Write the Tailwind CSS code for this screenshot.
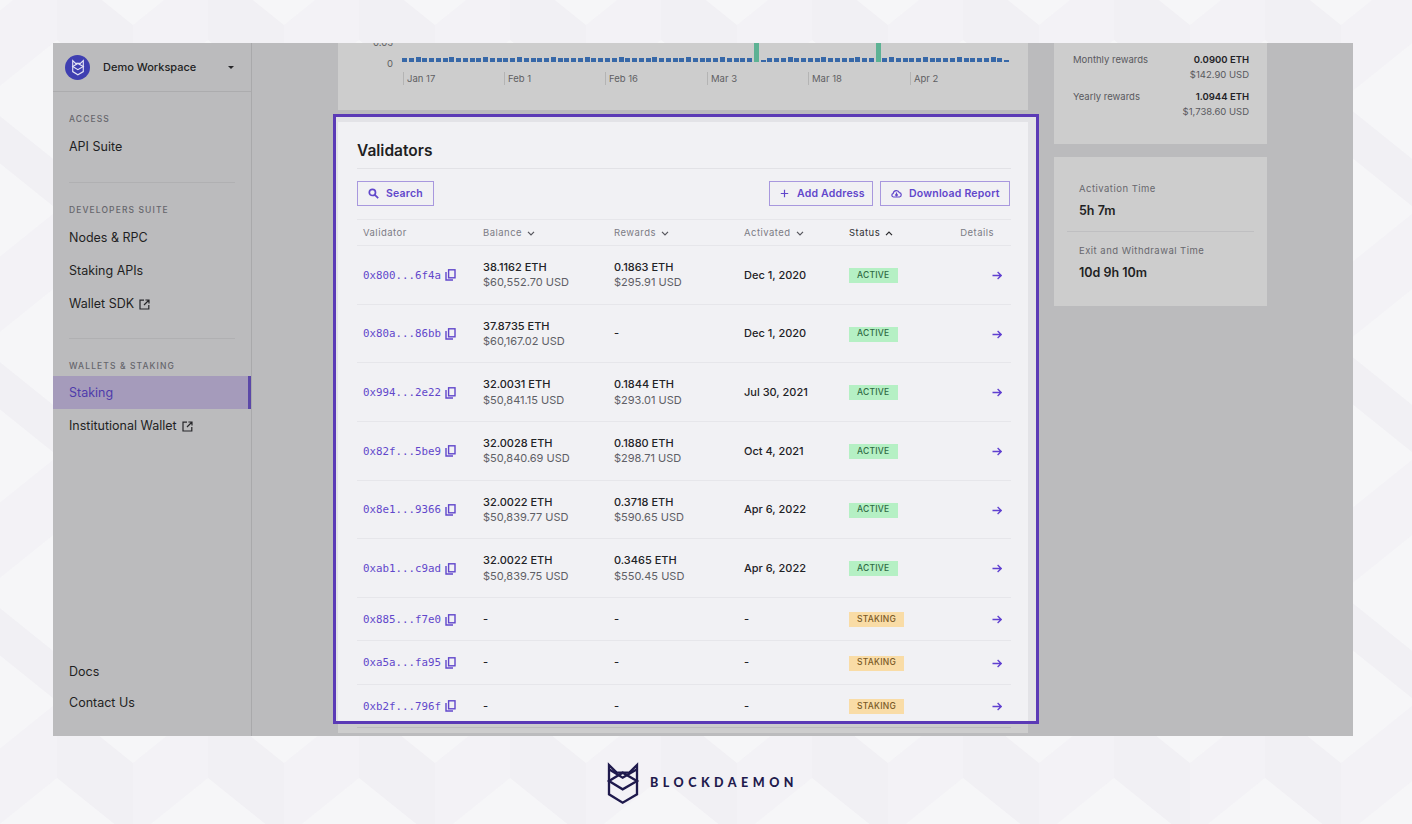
<!DOCTYPE html>
<html lang="en">
<head>
    <meta charset="UTF-8">
    <meta name="viewport" content="width=device-width, initial-scale=1.0">
    <title>Validators</title>
    <script src="https://cdn.jsdelivr.net/npm/@tailwindcss/browser@4"></script>
</head>
<body class="relative w-[1412px] h-[824px] overflow-hidden bg-[#f2f1f5] font-['Inter',sans-serif] text-[#1f1f23]">
    <!-- hexagon backdrop -->
    <svg class="absolute inset-0" width="1412" height="824">
        <defs>
            <pattern id="cubes" width="151" height="246" patternUnits="userSpaceOnUse" x="57" y="0">
                <polygon points="0,-36 76,25 76,101 0,40" fill="#f1f0f4"/>
                <polygon points="0,210 76,271 76,347 0,286" fill="#f1f0f4"/>
                <polygon points="76,25 151,-36 151,40 76,101" fill="#f3f2f6"/>
                <polygon points="76,271 151,210 151,286 76,347" fill="#f3f2f6"/>
                <polygon points="0,162 76,101 76,149 0,210" fill="#f3f2f6"/>
                <polygon points="76,101 151,162 151,210 76,149" fill="#f1f0f4"/>
                <polygon points="0,40 76,101 0,162" fill="#f6f6f8"/>
                <polygon points="151,40 151,162 75,101" fill="#f6f6f8"/>
                <polygon points="76,149 152,210 76,271 0,210" fill="#f6f6f8"/>
                <polygon points="76,-97 152,-36 76,25 0,-36" fill="#f6f6f8"/>
            </pattern>
        </defs>
        <rect width="1412" height="824" fill="url(#cubes)"/>
    </svg>

    <div class="relative flex flex-col pt-[43px] pl-[53px]">
        <!-- dimmed app window -->
        <div class="flex w-[1300px] h-[693px] overflow-hidden bg-[#bbbbbd]">
            <aside class="flex flex-col w-[199px] shrink-0 border-r border-[#a9a9ab]">
                <div class="flex items-center h-[49px] shrink-0 pl-[12px] pr-[17px] border-b border-[#acacae]">
                    <span class="flex items-center justify-center w-[25px] h-[25px] rounded-full bg-[#3f3fb1]">
                        <svg width="14" height="17" viewBox="45 30 108 135" fill="none" stroke="#e4e4f5" stroke-width="9">
                            <path d="M57 42V130L98 155L141 130V42L118 65H80Z"/>
                            <path d="M57 90L98 65L141 90L98 115Z"/>
                        </svg>
                    </span>
                    <span class="ml-[13px] pt-px text-[11px] font-medium">Demo Workspace</span>
                    <span class="ml-auto w-0 h-0 border-x-[3px] border-x-transparent border-t-[3px] border-t-[#27272a]"></span>
                </div>
                <nav class="flex flex-col flex-1 text-[12.5px] leading-[18px]">
                    <p class="mt-[21px] ml-[16px] text-[8.5px] leading-[12px] font-medium tracking-[0.13em] text-[#66666c]">ACCESS</p>
                    <a class="mt-[13px] ml-[16px]">API Suite</a>
                    <div class="mt-[26px] mx-[16px] h-px bg-[#b0b0b2]"></div>
                    <p class="mt-[21px] ml-[16px] text-[8.5px] leading-[12px] font-medium tracking-[0.13em] text-[#66666c]">DEVELOPERS SUITE</p>
                    <a class="mt-[13px] ml-[16px]">Nodes &amp; RPC</a>
                    <a class="mt-[15px] ml-[16px]">Staking APIs</a>
                    <a class="mt-[15px] ml-[16px] flex items-center gap-[5px]">Wallet SDK
                        <svg width="11" height="11" viewBox="0 0 11 11" fill="none" stroke="#27272a" stroke-width="1.2"><path d="M5 1.2H1V10H9.8V6M6.4 1H10V4.6M10 1L5 6"/></svg>
                    </a>
                    <div class="mt-[25px] mx-[16px] h-px bg-[#b0b0b2]"></div>
                    <p class="mt-[21px] ml-[16px] text-[8.5px] leading-[12px] font-medium tracking-[0.13em] text-[#66666c]">WALLETS &amp; STAKING</p>
                    <a class="mt-[4px] flex items-center h-[33px] pl-[16px] bg-[#a59bbb] border-r-[3px] border-[#5b47a8] text-[#4f3cab]">Staking</a>
                    <a class="mt-[8px] ml-[16px] flex items-center gap-[5px]">Institutional Wallet
                        <svg width="11" height="11" viewBox="0 0 11 11" fill="none" stroke="#27272a" stroke-width="1.2"><path d="M5 1.2H1V10H9.8V6M6.4 1H10V4.6M10 1L5 6"/></svg>
                    </a>
                    <a class="mt-auto ml-[16px]">Docs</a>
                    <a class="mt-[13px] mb-[24px] ml-[16px]">Contact Us</a>
                </nav>
            </aside>

            <main class="flex flex-1 pl-[86px] min-w-0">
                <div class="w-[690px] shrink-0">
                    <!-- chart, scrolled mostly out of view -->
                    <section class="h-[67px] overflow-hidden bg-[#cdcdcd] text-[9.5px] text-[#5f5f63]">
                        <div class="flex">
                            <div class="flex flex-col items-end w-[55px] -mt-[6px] leading-[12px]">
                                <span>0.05</span>
                                <span class="mt-[9px]">0</span>
                            </div>
                            <div id="bars" class="flex items-end gap-[1.77px] ml-[9px] h-[19px]"></div>
                        </div>
                        <div class="flex ml-[65px] mt-[2px] leading-[13px]">
                            <span class="w-[101px] border-l border-[#b4b4b4] pl-[3px]">Jan 17</span>
                            <span class="w-[101px] border-l border-[#b4b4b4] pl-[3px]">Feb 1</span>
                            <span class="w-[102px] border-l border-[#b4b4b4] pl-[3px]">Feb 16</span>
                            <span class="w-[101px] border-l border-[#b4b4b4] pl-[3px]">Mar 3</span>
                            <span class="w-[102px] border-l border-[#b4b4b4] pl-[3px]">Mar 18</span>
                            <span class="border-l border-[#b4b4b4] pl-[3px]">Apr 2</span>
                        </div>
                    </section>

                    <!-- highlighted validators card -->
                    <div class="mt-[4px] -ml-[5px] w-[706px] h-[610px] border-[3px] border-[#5b3ab6] bg-[#e3e3e7] pt-[5px] pl-[2px]">
                        <section class="w-[690px] h-[599px] bg-[#f1f1f4] pl-[19px] pr-[17px] overflow-hidden">
                            <h2 class="pt-[19px] pb-[7px] text-[15.5px] leading-[20px] font-semibold border-b border-[#e2e2e6]">Validators</h2>
                            <div class="flex items-center mt-[11px] h-[26px] text-[10.5px] font-semibold tracking-[0.02em] text-[#6147cb]">
                                <button class="flex items-center h-[25px] w-[77px] pl-[10px] gap-[7px] pt-px border border-[#a898de]">
                                    <svg width="11" height="11" viewBox="0 0 11 11" fill="none" stroke="#6147cb" stroke-width="1.7"><circle cx="4.4" cy="4.4" r="3.1"/><path d="M6.8 6.8L10.2 10.2"/></svg>
                                    Search
                                </button>
                                <button class="flex items-center h-[25px] w-[104px] ml-auto pl-[10px] gap-[8px] pt-px border border-[#a898de]">
                                    <svg width="9" height="9" viewBox="0 0 9 9" stroke="#6147cb" stroke-width="1.2"><path d="M4.5 .8V8.2M.8 4.5H8.2"/></svg>
                                    Add Address
                                </button>
                                <button class="flex items-center h-[25px] w-[130px] ml-[7px] mr-px pl-[10px] gap-[7px] pt-px border border-[#a898de]">
                                    <svg width="11" height="9" viewBox="0 0 11 9" fill="none" stroke="#6147cb" stroke-width="1.2"><path d="M3 8H2.4A1.9 1.9 0 0 1 2.2 4.3 3.2 3.2 0 0 1 8.4 3.7 2.2 2.2 0 0 1 8.6 8Z"/><path d="M5.5 3.6V6.6M4.2 5.5L5.5 6.8L6.8 5.5"/></svg>
                                    Download Report
                                </button>
                            </div>
                            <div class="grid grid-cols-[126px_131px_130px_105px_1fr] items-center h-[27px] mt-[13px] pt-px border-y border-[#e6e6ea] text-[9.5px] tracking-[0.05em] text-[#7c7c85]">
                                <span class="pl-[6px]">Validator</span>
                                <span class="flex items-center gap-[5px]">Balance <svg width="8" height="5" viewBox="0 0 8 5" fill="none" stroke="#55555c" stroke-width="1.2"><path d="M1 .8L4 3.8L7 .8"/></svg></span>
                                <span class="flex items-center gap-[5px]">Rewards <svg width="8" height="5" viewBox="0 0 8 5" fill="none" stroke="#55555c" stroke-width="1.2"><path d="M1 .8L4 3.8L7 .8"/></svg></span>
                                <span class="flex items-center gap-[5px]">Activated <svg width="8" height="5" viewBox="0 0 8 5" fill="none" stroke="#55555c" stroke-width="1.2"><path d="M1 .8L4 3.8L7 .8"/></svg></span>
                                <span class="flex items-center justify-between pr-[17px]">
                                    <span class="flex items-center gap-[5px] text-[#2f2f33]">Status <svg width="8" height="5" viewBox="0 0 8 5" fill="none" stroke="#27272a" stroke-width="1.2"><path d="M1 4.2L4 1.2L7 4.2"/></svg></span>
                                    <span>Details</span>
                                </span>
                            </div>
                            <div id="rows"></div>
                        </section>
                    </div>
                    <div class="h-[9px] bg-[#cdcdcd] pt-[3px] pl-[19px] pr-[17px]"><div class="h-px bg-[#bdbdbd]"></div></div>
                </div>

                <div class="w-[213px] ml-[26px] shrink-0">
                    <section class="h-[101px] bg-[#cdcdcd] pt-[10px] pl-[19px] pr-[18px] text-[9.5px] leading-[14px] text-[#59595e]">
                        <div class="flex justify-between">
                            <span>Monthly rewards</span>
                            <span class="text-right"><b class="block font-semibold text-[#222226]">0.0900 ETH</b><span class="block mt-px">$142.90 USD</span></span>
                        </div>
                        <div class="flex justify-between mt-[8px]">
                            <span>Yearly rewards</span>
                            <span class="text-right"><b class="block font-semibold text-[#222226]">1.0944 ETH</b><span class="block mt-px">$1,738.60 USD</span></span>
                        </div>
                    </section>
                    <section class="h-[149px] mt-[13px] bg-[#cdcdcd] pt-[25px] px-[13px]">
                        <p class="pl-[12px] text-[9.5px] leading-[14px] tracking-[0.05em] text-[#68686e]">Activation Time</p>
                        <p class="pl-[12px] mt-[7px] text-[12.5px] leading-[16px] font-semibold">5h 7m</p>
                        <div class="mt-[12px] h-px bg-[#bfbfc1]"></div>
                        <p class="pl-[12px] mt-[12px] text-[9.5px] leading-[14px] tracking-[0.05em] text-[#68686e]">Exit and Withdrawal Time</p>
                        <p class="pl-[12px] mt-[7px] text-[12.5px] leading-[16px] font-semibold">10d 9h 10m</p>
                    </section>
                </div>
            </main>
        </div>

        <!-- logo -->
        <div class="flex items-center h-[94px] pl-[552px]">
            <svg width="36" height="45" viewBox="45 30 108 135" fill="none" stroke="#1f1a4d" stroke-width="7">
                <path d="M57 42V130L98 155L141 130V42L118 65H80Z"/>
                <path d="M57 55L98 80L141 55M57 90L98 65L141 90L98 115Z"/>
            </svg>
            <span class="ml-[9px] text-[12.5px] font-black tracking-[4.5px] text-[#1f1a4d] font-['Lato',sans-serif]">BLOCKDAEMON</span>
        </div>
    </div>

    <script>
        const copyIcon = `<svg width="11" height="12" viewBox="0 0 11 12" fill="none" stroke="#6147cb" stroke-width="1.4"><rect x="3.6" y=".8" width="6.4" height="8"/><path d="M1 3V11H8"/></svg>`;
        const arrowIcon = `<svg width="10" height="9" viewBox="0 0 10 9" fill="none" stroke="#5f3fd0" stroke-width="1.3"><path d="M.5 4.5H9M5.6 1L9.2 4.5L5.6 8"/></svg>`;
        const validators = [
            ['0x800...6f4a', '38.1162 ETH', '$60,552.70 USD', '0.1863 ETH', '$295.91 USD', 'Dec 1, 2020', 'ACTIVE'],
            ['0x80a...86bb', '37.8735 ETH', '$60,167.02 USD', '-', '', 'Dec 1, 2020', 'ACTIVE'],
            ['0x994...2e22', '32.0031 ETH', '$50,841.15 USD', '0.1844 ETH', '$293.01 USD', 'Jul 30, 2021', 'ACTIVE'],
            ['0x82f...5be9', '32.0028 ETH', '$50,840.69 USD', '0.1880 ETH', '$298.71 USD', 'Oct 4, 2021', 'ACTIVE'],
            ['0x8e1...9366', '32.0022 ETH', '$50,839.77 USD', '0.3718 ETH', '$590.65 USD', 'Apr 6, 2022', 'ACTIVE'],
            ['0xab1...c9ad', '32.0022 ETH', '$50,839.75 USD', '0.3465 ETH', '$550.45 USD', 'Apr 6, 2022', 'ACTIVE'],
            ['0x885...f7e0', '-', '', '-', '', '-', 'STAKING'],
            ['0xa5a...fa95', '-', '', '-', '', '-', 'STAKING'],
            ['0xb2f...796f', '-', '', '-', '', '-', 'STAKING'],
        ];
        const amount = (top, sub) => `<span><span class="block font-medium text-[#222226]">${top}</span>${sub ? `<span class="block text-[#5f5f66]">${sub}</span>` : ''}</span>`;
        document.getElementById('rows').innerHTML = validators.map(v => {
            const active = v[6] === 'ACTIVE';
            return `<div class="grid grid-cols-[126px_131px_130px_105px_1fr] items-center pt-px ${active ? 'h-[58.7px]' : 'h-[43.3px]'} border-b border-[#e6e6ea] text-[11px] leading-[15.5px]">
                <span class="flex items-center gap-[4px] pl-[6px] font-['DejaVu_Sans_Mono',monospace] text-[10.8px] text-[#6147cb]">${v[0]}${copyIcon}</span>
                ${amount(v[1], v[2])}
                ${amount(v[3], v[4])}
                <span class="font-medium text-[#222226]">${v[5]}</span>
                <span class="flex items-center justify-between pr-[9px]">
                    <span class="flex items-center h-[15px] px-[8px] text-[8.5px] font-medium tracking-[0.03em] ${active ? 'bg-[#b5f0c4] text-[#2f6b45]' : 'bg-[#f9dca6] text-[#7a5a26]'}">${v[6]}</span>
                    ${arrowIcon}
                </span>
            </div>`;
        }).join('');

        // one bar a day, two reward spikes
        let bars = '';
        for (let i = 0; i < 90; i++) {
            if (i === 52 || i === 70) bars += '<div class="w-[5px] h-[19px] bg-[#5db294]"></div>';
            else if (i === 53 || i === 89) bars += '<div class="w-[5px] h-[2px] bg-[#3768a8]"></div>';
            else if (i % 5 === 2) bars += '<div class="w-[5px] h-[5px] bg-[#3768a8]"></div>';
            else bars += '<div class="w-[5px] h-[4px] bg-[#3768a8]"></div>';
        }
        document.getElementById('bars').innerHTML = bars;
    </script>
</body>
</html>
